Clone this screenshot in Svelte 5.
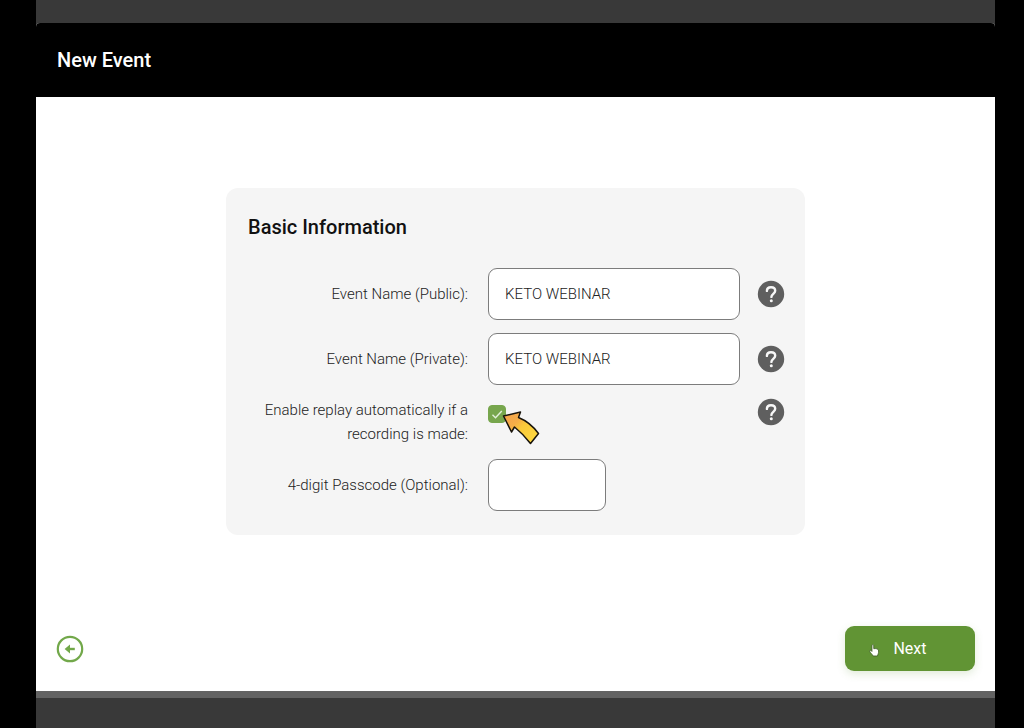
<script>
  let publicName = $state('KETO WEBINAR');
  let privateName = $state('KETO WEBINAR');
  let replay = $state(true);
  let passcode = $state('');
</script>

{#snippet help(topic)}
  <button class="help" type="button" aria-label={topic}>
    <svg viewBox="0 0 28 28" aria-hidden="true">
      <circle cx="14" cy="14" r="13.2" fill="#5f5f5f" />
      <path d="M9.900 10.900C9.900 8.500 11.600 7.200 14 7.200s4.200 1.300 4.200 3.500c0 2.900-3.800 3.300-3.800 6.200" fill="none" stroke="#f7f7f7" stroke-width="2.4" stroke-linecap="round" />
      <circle cx="14.300" cy="20.700" r="1.500" fill="#f7f7f7" />
    </svg>
  </button>
{/snippet}

<div class="page">
  <main class="dialog">
    <header><h1>New Event</h1></header>
    <form class="body" onsubmit={(e) => e.preventDefault()}>
      <section class="card">
        <h2>Basic Information</h2>
        <div class="fields">
          <label for="public">Event Name (Public):</label>
          <input id="public" class="text" type="text" bind:value={publicName} />
          {@render help('About the public name')}

          <label for="private">Event Name (Private):</label>
          <input id="private" class="text" type="text" bind:value={privateName} />
          {@render help('About the private name')}

          <label for="replay">Enable replay automatically if a recording is made:</label>
          <div class="check">
            <input id="replay" type="checkbox" bind:checked={replay} />
            {#if replay}
              <svg class="tick" viewBox="0 0 18 18" aria-hidden="true">
                <path d="M4.500 9.800l3 3 6.300-6.800" fill="none" stroke="#e3f0da" stroke-width="1.4" />
              </svg>
            {/if}
            <svg class="pointer" viewBox="0 0 38 34" aria-hidden="true">
              <defs>
                <linearGradient id="gold" x1="0" y1="0" x2="1" y2="1">
                  <stop offset="0" stop-color="#f3a04c" />
                  <stop offset="0.35" stop-color="#f5ae48" />
                  <stop offset="0.5" stop-color="#fac93a" />
                  <stop offset="1" stop-color="#ffdc40" />
                </linearGradient>
              </defs>
              <path d="M1.500 5L18.500 1l-2 5.500C24 9.500 31 15 36.500 22.500L28.500 32.500C23.500 26 18 20.500 12.500 16L9.500 21z" fill="url(#gold)" stroke="#17130c" stroke-width="1.5" stroke-linejoin="round" />
            </svg>
          </div>
          {@render help('About replays')}

          <label for="passcode">4-digit Passcode (Optional):</label>
          <input id="passcode" class="text short" type="text" maxlength="4" bind:value={passcode} />
        </div>
      </section>
      <footer>
        <button class="back" type="button" aria-label="Back">
          <svg viewBox="0 0 28 28" aria-hidden="true">
            <circle cx="14" cy="14" r="12.2" fill="none" stroke="#72a84a" stroke-width="2.2" />
            <path d="M18.800 14H11" fill="none" stroke="#72a84a" stroke-width="2.4" />
            <path d="M8.600 14l5.400-4.600v9.200z" fill="#72a84a" />
          </svg>
        </button>
        <button class="next" type="submit">
          Next
          <svg class="hand" viewBox="0 0 12 16" aria-hidden="true">
            <path d="M3.200 9V2.800c0-1.700 2-1.700 2 0V6c2.300-.4 5.300 0 5.300 2.500 0 2.500-.7 3.500-1.300 5.500H4.500C3.500 12 1.300 10.500.8 8.800c-.2-1.300 1.200-1.500 2.400.2z" fill="#fff" stroke="#3d5b24" stroke-width=".9" />
          </svg>
        </button>
      </footer>
    </form>
  </main>
</div>

<style>
  :global(body) { background: #000; }
  * { box-sizing: border-box; }
  .page {
    min-height: 100vh;
    margin: 0 29px 0 36px;
    padding: 23px 0 30px;
    display: flex;
    background: #393939;
    font-family: Roboto, "Liberation Sans", sans-serif;
    font-size: 15px;
    line-height: 24px;
    color: #222;
  }
  .dialog {
    flex: 1;
    display: flex;
    flex-direction: column;
    border-bottom: 7px solid #636363;
    border-radius: 4px 4px 0 0;
    background: #fff;
    overflow: hidden;
  }
  header { padding: 25px 21px; background: #000; }
  h1, h2 { margin: 0; font-size: 20px; line-height: 24px; font-weight: 500; }
  h1 { color: #fff; }
  h2 { color: #111; }
  .body {
    flex: 1;
    display: flex;
    flex-direction: column;
    align-items: center;
    justify-content: space-between;
    padding: 91px 20px 20px;
  }
  .card {
    width: 100%;
    max-width: 579px;
    padding: 27px 20px 24px 22px;
    border-radius: 12px;
    background: #f5f5f5;
  }
  .fields {
    display: grid;
    grid-template-columns: 1fr 252px 28px;
    gap: 13px 17px;
    align-items: center;
    margin-top: 29px;
  }
  label { text-align: right; font-weight: 300; padding-right: 3px; }
  .text {
    width: 100%;
    height: 52px;
    padding: 0 16px;
    border: 1px solid #7c7c7c;
    border-radius: 9px;
    background: #fff;
    color: #222;
    font: inherit;
    font-weight: 300;
  }
  .short { width: 118px; }
  button { border: 0; padding: 0; font: inherit; background: none; cursor: pointer; }
  .help, .back { width: 28px; height: 28px; }
  .help svg, .back svg { display: block; width: 100%; height: 100%; }
  .check { position: relative; align-self: start; height: 24px; padding-top: 7px; }
  .check ~ .help { align-self: start; }
  .check input {
    appearance: none;
    display: block;
    width: 18px;
    height: 18px;
    margin: 0;
    border: 1px solid #77a64d;
    border-radius: 4px;
    background: #fff;
  }
  .check input:checked { background: #77a64d; }
  .tick { position: absolute; left: 0; top: 7px; width: 18px; height: 18px; pointer-events: none; }
  .pointer { position: absolute; left: 14px; top: 13px; width: 38px; height: 34px; pointer-events: none; }
  footer { align-self: stretch; display: flex; justify-content: space-between; align-items: center; }
  .next {
    position: relative;
    width: 130px;
    height: 45px;
    border-radius: 9px;
    background: #619434;
    box-shadow: 0 3px 8px #61943430;
    color: #fff;
    font-size: 16px;
  }
  .hand { position: absolute; left: 24px; top: 17px; width: 11px; height: 15px; }
</style>
